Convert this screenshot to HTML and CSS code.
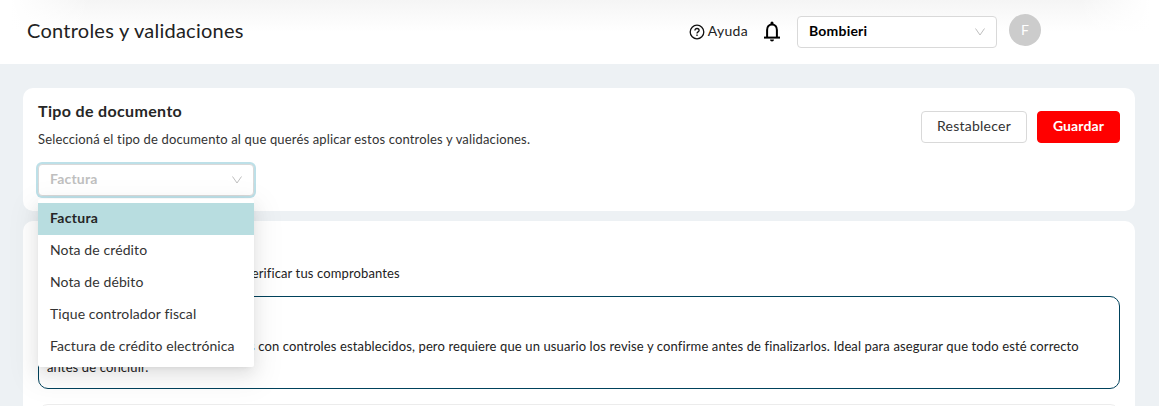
FILE: index.html
```html
<!DOCTYPE html>
<html lang="es">
<head>
    <meta charset="UTF-8">
    <title>Controles y validaciones</title>
    <link rel="stylesheet" href="styles.css">
</head>
<body>
<header class="header">
    <h1 class="page-title">Controles y validaciones</h1>
    <a class="help">
        <svg class="help-icon" viewBox="0 0 16 16" width="16" height="16">
            <circle cx="8" cy="8" r="6.8"/>
            <path d="M5.9 6.6C5.9 5.3 6.8 4.5 8 4.5s2.1.8 2.1 1.9c0 1.5-2.1 1.5-2.1 3"/>
            <path d="M8 10.6v1.3"/>
        </svg>
        <span>Ayuda</span>
    </a>
    <svg class="bell" viewBox="0 0 18 21" width="18" height="21">
        <path d="M4.1 16.5V9c0-3.2 2-5.6 4.9-5.6s4.9 2.4 4.9 5.6v7.5"/>
        <path d="M1 16.6h16"/>
        <path class="fill" d="M7.5 3.5V1.9a1.500 1.500 0 0 1 3 0v1.600zM7 18.500h4a2 2 0 0 1-4 0z"/>
    </svg>
    <div class="select company">
        <span>Bombieri</span>
        <svg class="arrow" viewBox="0 0 12 10" width="12" height="10"><path d="M1.5 1.5 6 8l4.5-6.5"/></svg>
    </div>
    <div class="avatar">F</div>
</header>

<main class="content">
    <section class="card document">
        <div class="document-type">
            <h2>Tipo de documento</h2>
            <p>Seleccioná el tipo de documento al que querés aplicar estos controles y validaciones.</p>
            <div class="dropdown">
                <div class="select open">
                    <span>Factura</span>
                    <svg class="arrow" viewBox="0 0 12 10" width="12" height="10"><path d="M1.5 1.5 6 8l4.5-6.5"/></svg>
                </div>
                <ul class="menu">
                    <li class="selected">Factura</li>
                    <li>Nota de crédito</li>
                    <li>Nota de débito</li>
                    <li>Tique controlador fiscal</li>
                    <li>Factura de crédito electrónica</li>
                </ul>
            </div>
        </div>
        <div class="actions">
            <button class="btn">Restablecer</button>
            <button class="btn primary">Guardar</button>
        </div>
    </section>

    <section class="card controls">
        <p class="intro">verificar tus comprobantes</p>
        <div class="option active">
            <p class="first-line">s con controles establecidos, pero requiere que un usuario los revise y confirme antes de finalizarlos. Ideal para asegurar que todo esté correcto</p>
            <p>antes de concluir.</p>
        </div>
        <div class="option"></div>
    </section>
</main>
</body>
</html>
```
FILE: styles.css
```css
* {
    box-sizing: border-box;
}
body {
    margin: 0;
    background: #edf1f4;
    color: #333;
    font-family: Lato, "Open Sans", sans-serif;
    font-size: 14px;
    line-height: 22px;
}
h1, h2, p, ul {
    margin: 0;
    padding: 0;
}
.header {
    display: flex;
    align-items: center;
    height: 64px;
    padding: 0 118px 0 27px;
    background: linear-gradient(90deg, #fff 10px, rgba(255, 255, 255, 0) 90px, rgba(255, 255, 255, 0) 1080px, #fff 1150px), linear-gradient(#f5f5f5, #fff 32px);
}
.page-title {
    margin-right: auto;
    padding-bottom: 4px;
    font-size: 20px;
    font-weight: 400;
    color: #222;
    letter-spacing: 0.25px;
}
.help {
    display: flex;
    align-items: center;
    gap: 3px;
    color: #222;
    letter-spacing: 0.3px;
}
.help span {
    padding-bottom: 2px;
}
.help-icon {
    fill: none;
    stroke: #111;
    stroke-width: 1.3;
}
.bell {
    margin: 0 16px 2px 15px;
    fill: none;
    stroke: #000;
    stroke-width: 2;
}
.bell .fill {
    fill: #000;
    stroke: none;
}
.select {
    display: flex;
    align-items: center;
    justify-content: space-between;
    height: 32px;
    padding: 0 10px 0 11px;
    border: 1px solid #d9d9d9;
    border-radius: 4px;
    background: #fff;
    font-weight: 700;
    letter-spacing: 0.2px;
}
.select span {
    padding-bottom: 2px;
}
.company {
    width: 200px;
    color: #000;
}
.arrow {
    fill: none;
    stroke: #bfbfbf;
    stroke-width: 1;
}
.avatar {
    width: 32px;
    height: 32px;
    margin: 0 0 4px 12px;
    border-radius: 50%;
    background: #ccc;
    color: #fff;
    line-height: 31px;
    text-align: center;
}
.content {
    display: flex;
    flex-direction: column;
    gap: 10px;
    padding: 24px 24px 0 23px;
}
.card {
    padding: 0 15px;
    border-radius: 10px;
    background: #fff;
}
.document {
    display: flex;
    justify-content: space-between;
    height: 123px;
}
.document h2 {
    margin-top: 12px;
    font-size: 16px;
    font-weight: 700;
    color: #262626;
    letter-spacing: 0.35px;
}
.document p {
    margin: 6px 0 14px;
    font-size: 13px;
    letter-spacing: 0.155px;
}
.dropdown {
    position: relative;
    width: 216px;
}
.open {
    color: #bfbfbf;
    box-shadow: 0 0 0 2px #bde0e8;
}
.menu {
    position: absolute;
    top: 35px;
    left: 0;
    width: 216px;
    padding: 4px 0;
    border-radius: 2px;
    background: #fff;
    box-shadow: 0 3px 6px -4px rgba(0, 0, 0, 0.12), 0 6px 16px rgba(0, 0, 0, 0.08), 0 9px 28px 8px rgba(0, 0, 0, 0.05);
    list-style: none;
    letter-spacing: 0.1px;
}
.menu li {
    height: 32px;
    padding: 4px 12px;
    white-space: nowrap;
}
.menu .selected {
    background: #b8dde0;
    font-weight: 700;
    color: #262626;
    letter-spacing: 0.3px;
}
.actions {
    display: flex;
    gap: 10px;
    margin-top: 23px;
}
.btn {
    width: 106px;
    height: 32px;
    padding: 0 0 2px;
    border: 1px solid #d9d9d9;
    border-radius: 4px;
    background: #fff;
    color: #333;
    font: inherit;
    letter-spacing: 0.25px;
}
.primary {
    width: 83px;
    border-color: #f00;
    background: #f00;
    color: #fff;
    font-weight: 700;
    letter-spacing: 0.1px;
}
.controls {
    height: 185px;
    padding-top: 41px;
    border-radius: 10px 10px 0 0;
    overflow: hidden;
    font-size: 13px;
    color: #222;
    letter-spacing: 0.125px;
}
.intro {
    padding-left: 207px;
}
.option {
    height: 93px;
    margin-bottom: 15px;
    border: 1px solid #ececec;
    border-radius: 10px;
}
.option.active {
    margin-top: 12px;
    padding: 39px 8px 0;
    border-color: #00425c;
    line-height: 21px;
}
.option p {
    white-space: nowrap;
}
.option .first-line {
    padding-left: 202px;
}
```
